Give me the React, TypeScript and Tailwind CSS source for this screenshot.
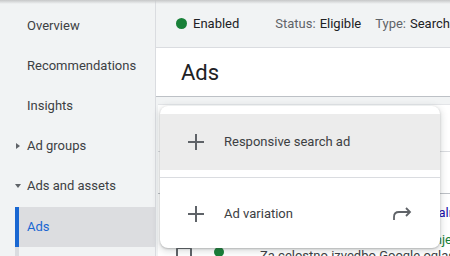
const navItems = [
  { label: "Overview" },
  { label: "Recommendations" },
  { label: "Insights" },
  { label: "Ad groups", caret: "right" },
  { label: "Ads and assets", caret: "down" },
];

const PlusIcon = () => (
  <svg width="18" height="18" viewBox="0 0 18 18" className="shrink-0">
    <path d="M9 1v16M1 9h16" stroke="#5f6368" strokeWidth="2" fill="none" />
  </svg>
);

const ForwardArrow = () => (
  <svg width="21" height="14" viewBox="0 0 21 14" fill="none">
    <path d="M2 13V10Q2 5 7 5H18" stroke="#5f6368" strokeWidth="1.8" />
    <path d="M14 1l4 4-4 4" stroke="#5f6368" strokeWidth="1.8" />
  </svg>
);

const Sidebar = () => (
  <aside className="flex w-[156px] shrink-0 flex-col overflow-hidden border-r border-[#dadce0] bg-[#f1f3f4] pt-[6px]">
    {navItems.map((item) => (
      <div
        key={item.label}
        className="relative flex h-10 shrink-0 items-center pl-[27px] text-[13px] text-[#3c4043]"
      >
        {item.caret === "right" && (
          <span className="absolute left-[16px] top-[17px] h-0 w-0 border-y-[3.5px] border-l-[4px] border-y-transparent border-l-[#5f6368]" />
        )}
        {item.caret === "down" && (
          <span className="absolute left-[15px] top-[18px] h-0 w-0 border-x-[3.5px] border-t-[4px] border-x-transparent border-t-[#5f6368]" />
        )}
        {item.label}
      </div>
    ))}
    <div className="ml-[15px] mt-px flex h-10 shrink-0 items-center border-l-4 border-[#1967d2] bg-[#dcdde0] pl-[8px] text-[13px] text-[#1967d2]">
      Ads
    </div>
    <div className="ml-[15px] h-10 w-1 shrink-0 bg-[#dadce0]" />
  </aside>
);

const StatusBar = () => (
  <div className="flex h-[48px] shrink-0 items-center border-b border-[#dadce0] bg-[#f1f3f4] pl-[20px] text-[13px] text-[#202124]">
    <span className="mr-[6px] h-[11px] w-[11px] shrink-0 rounded-full bg-[#188038]" />
    <span className="shrink-0">Enabled</span>
    <span className="ml-[36px] shrink-0 text-[#5f6368]">Status:</span>
    <span className="ml-1 shrink-0">Eligible</span>
    <span className="ml-[14px] shrink-0 text-[#5f6368]">Type:</span>
    <span className="ml-1 shrink-0 whitespace-nowrap">Search</span>
  </div>
);

const AdsTable = () => (
  <div className="flex-1 bg-[#f1f3f4] pl-[2px] pt-[7px]">
    <div className="h-full border-t border-[#e3e5e8] bg-white">
      <div className="h-[47px] border-b border-[#dadce0]" />
      <div className="h-[42px] border-b border-[#bdc1c6]" />
      <div className="relative flex">
        <div className="w-[102px] shrink-0" />
        <div className="min-w-0 flex-1 overflow-hidden">
          <div className="-mr-[2px] mt-[9px] whitespace-nowrap text-right text-[13px] text-[#1a0dab]">
            Google oglaševanje | Profesionalno
          </div>
          <div className="-mr-[2px] mt-[7px] whitespace-nowrap text-right text-[13px] text-[#188038]">
            www.spletno-oglasevanje
          </div>
          <div className="mt-[-3px] whitespace-nowrap text-[13px] text-[#3c4043]">
            Za celostno izvedbo Google oglaševanja
          </div>
        </div>
        <span className="absolute left-[18px] top-[53px] h-[16px] w-[16px] rounded-[2px] border-2 border-[#5f6368]" />
        <span className="absolute left-[56px] top-[53px] h-[10px] w-[10px] rounded-full bg-[#188038]" />
      </div>
    </div>
  </div>
);

const CreateMenu = () => (
  <div className="absolute left-[160px] top-[106px] w-[280px] rounded-lg bg-white pb-[6px] pt-2 shadow-[0_2px_6px_2px_rgba(60,64,67,0.15),0_1px_2px_rgba(60,64,67,0.3)]">
    <div className="flex h-14 items-center bg-[#ececec] pl-[27px] text-[13px] text-[#3c4043]">
      <PlusIcon />
      <span className="ml-[19px]">Responsive search ad</span>
    </div>
    <div className="mt-[7px] h-px bg-[#dadce0]" />
    <div className="mt-2 flex h-14 items-center pl-[27px] pr-[27px] text-[13px] text-[#3c4043]">
      <PlusIcon />
      <span className="ml-[19px]">Ad variation</span>
      <span className="ml-auto">
        <ForwardArrow />
      </span>
    </div>
  </div>
);

export default function App() {
  return (
    <div className="relative flex h-[256px] w-[450px] overflow-hidden bg-white font-['Roboto',_'Liberation_Sans',_sans-serif]">
      <Sidebar />
      <main className="flex min-w-0 flex-1 flex-col">
        <StatusBar />
        <div className="flex h-[49px] shrink-0 items-center border-b border-[#bdc1c6] bg-white pl-[25px] text-[22px] text-[#202124]">
          Ads
        </div>
        <AdsTable />
      </main>
      <CreateMenu />
      <div className="pointer-events-none absolute inset-x-0 top-0 h-[4px] bg-gradient-to-b from-[#c6c7c8] to-transparent" />
    </div>
  );
}
